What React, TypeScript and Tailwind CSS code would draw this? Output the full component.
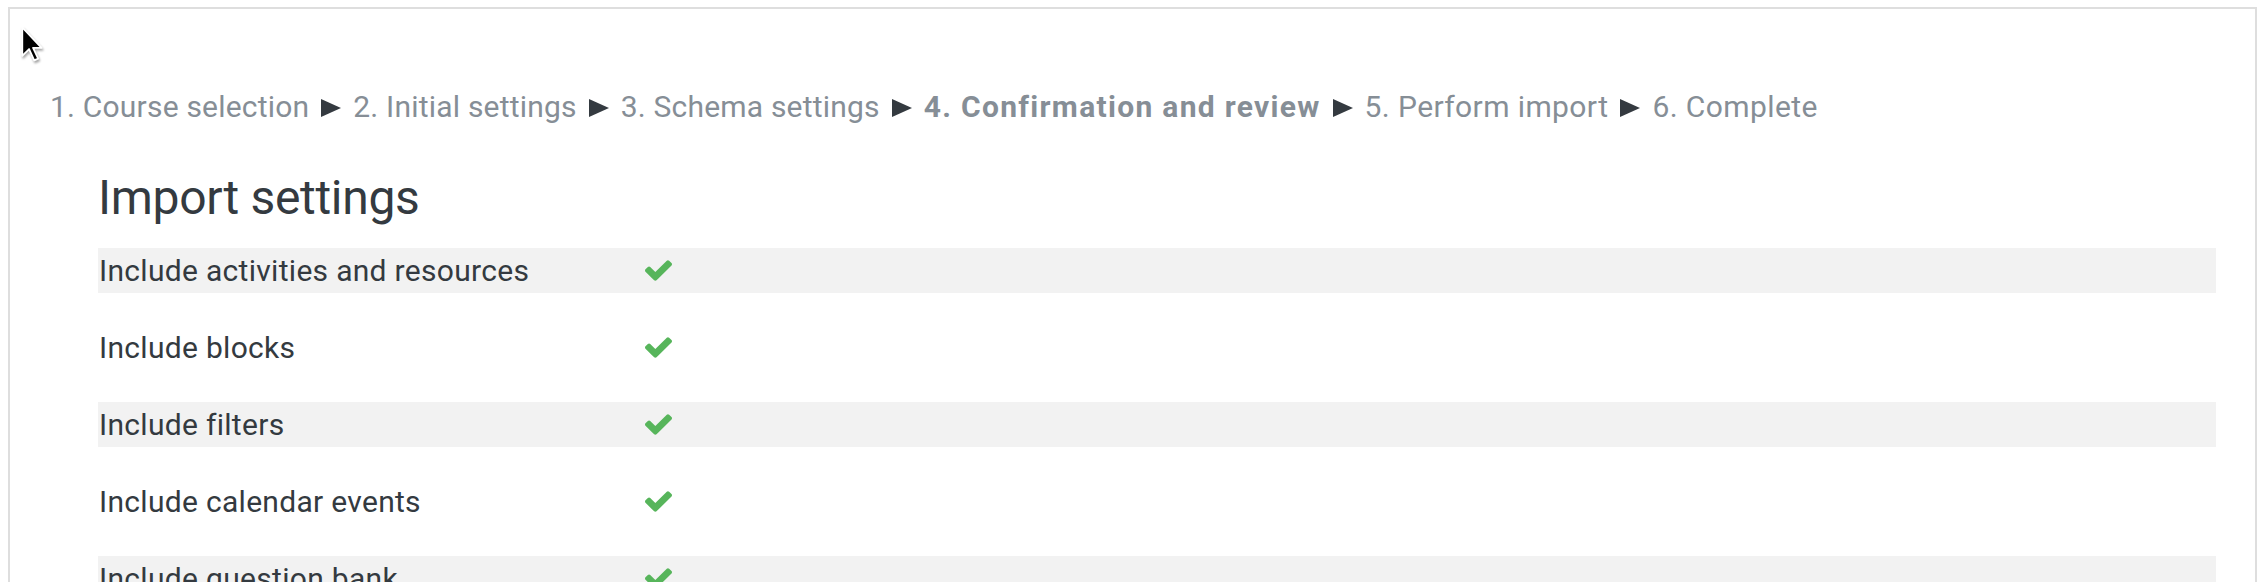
import React from "react";

const steps = [
  "1. Course selection",
  "2. Initial settings",
  "3. Schema settings",
  "4. Confirmation and review",
  "5. Perform import",
  "6. Complete",
];

const settings = [
  "Include activities and resources",
  "Include blocks",
  "Include filters",
  "Include calendar events",
  "Include question bank",
];

function Arrow() {
  return (
    <svg width="20" height="18" viewBox="0 0 20 18" className="inline-block mx-[12px] align-baseline">
      <polygon points="0,0 20,9 0,18" fill="#343a40" />
    </svg>
  );
}

function Check() {
  return (
    <svg width="27" height="21" viewBox="121 334 1550 1188" className="shrink-0">
      <path
        fill="#57b55b"
        d="M1671 566q0 40-28 68l-724 724-136 136q-28 28-68 28t-68-28l-136-136-362-362q-28-28-28-68t28-68l136-136q28-28 68-28t68 28l294 295 656-657q28-28 68-28t68 28l136 136q28 28 28 68z"
      />
    </svg>
  );
}

function Cursor() {
  return (
    <svg width="25" height="39" viewBox="0 0 22 34" className="absolute left-[20px] top-[25px] drop-shadow-[1px_2px_1px_rgba(0,0,0,0.35)]">
      <path
        d="M2 2 L2 27 L8 21 L12.5 31 L16 29.5 L11.5 20 L19 20 Z"
        fill="#000"
        stroke="#fff"
        strokeWidth="1.6"
        strokeLinejoin="round"
      />
    </svg>
  );
}

export default function App() {
  return (
    <div className="relative w-[2266px] h-[582px] overflow-hidden bg-white font-['Roboto',sans-serif]">
      <div className="ml-[8px] mt-[7px] w-[2249px] h-[600px] border-2 border-b-0 border-[#dedede] pl-[40px] pr-[39px] pt-[75px]">
        {/* Progress */}
        <div className="text-[30px] leading-[45px] text-[#868e96] whitespace-nowrap tracking-[0.2px]">
          {steps.map((s, i) => (
            <span key={s}>
              {i > 0 && <Arrow />}
              <span className={i === 3 ? "font-bold tracking-[1.3px]" : i > 3 ? "tracking-[0.4px]" : ""}>{s}</span>
            </span>
          ))}
        </div>

        <div className="ml-[48px]">
          <h2 className="mt-[40px] mb-[21px] text-[48px] leading-[58px] text-[#343a40] font-normal tracking-[-0.3px]">
            Import settings
          </h2>

          <div className="flex flex-col gap-[32px]">
            {settings.map((s, i) => (
              <div
                key={s}
                className={`flex items-center h-[45px] ${i % 2 === 0 ? "bg-[#f2f2f2]" : ""}`}
              >
                <div className="w-[547px] shrink-0 text-[30px] leading-[45px] text-[#343a40] tracking-[0.3px] pl-[1px]">
                  {s}
                </div>
                <Check />
              </div>
            ))}
          </div>
        </div>
      </div>
      <Cursor />
    </div>
  );
}
